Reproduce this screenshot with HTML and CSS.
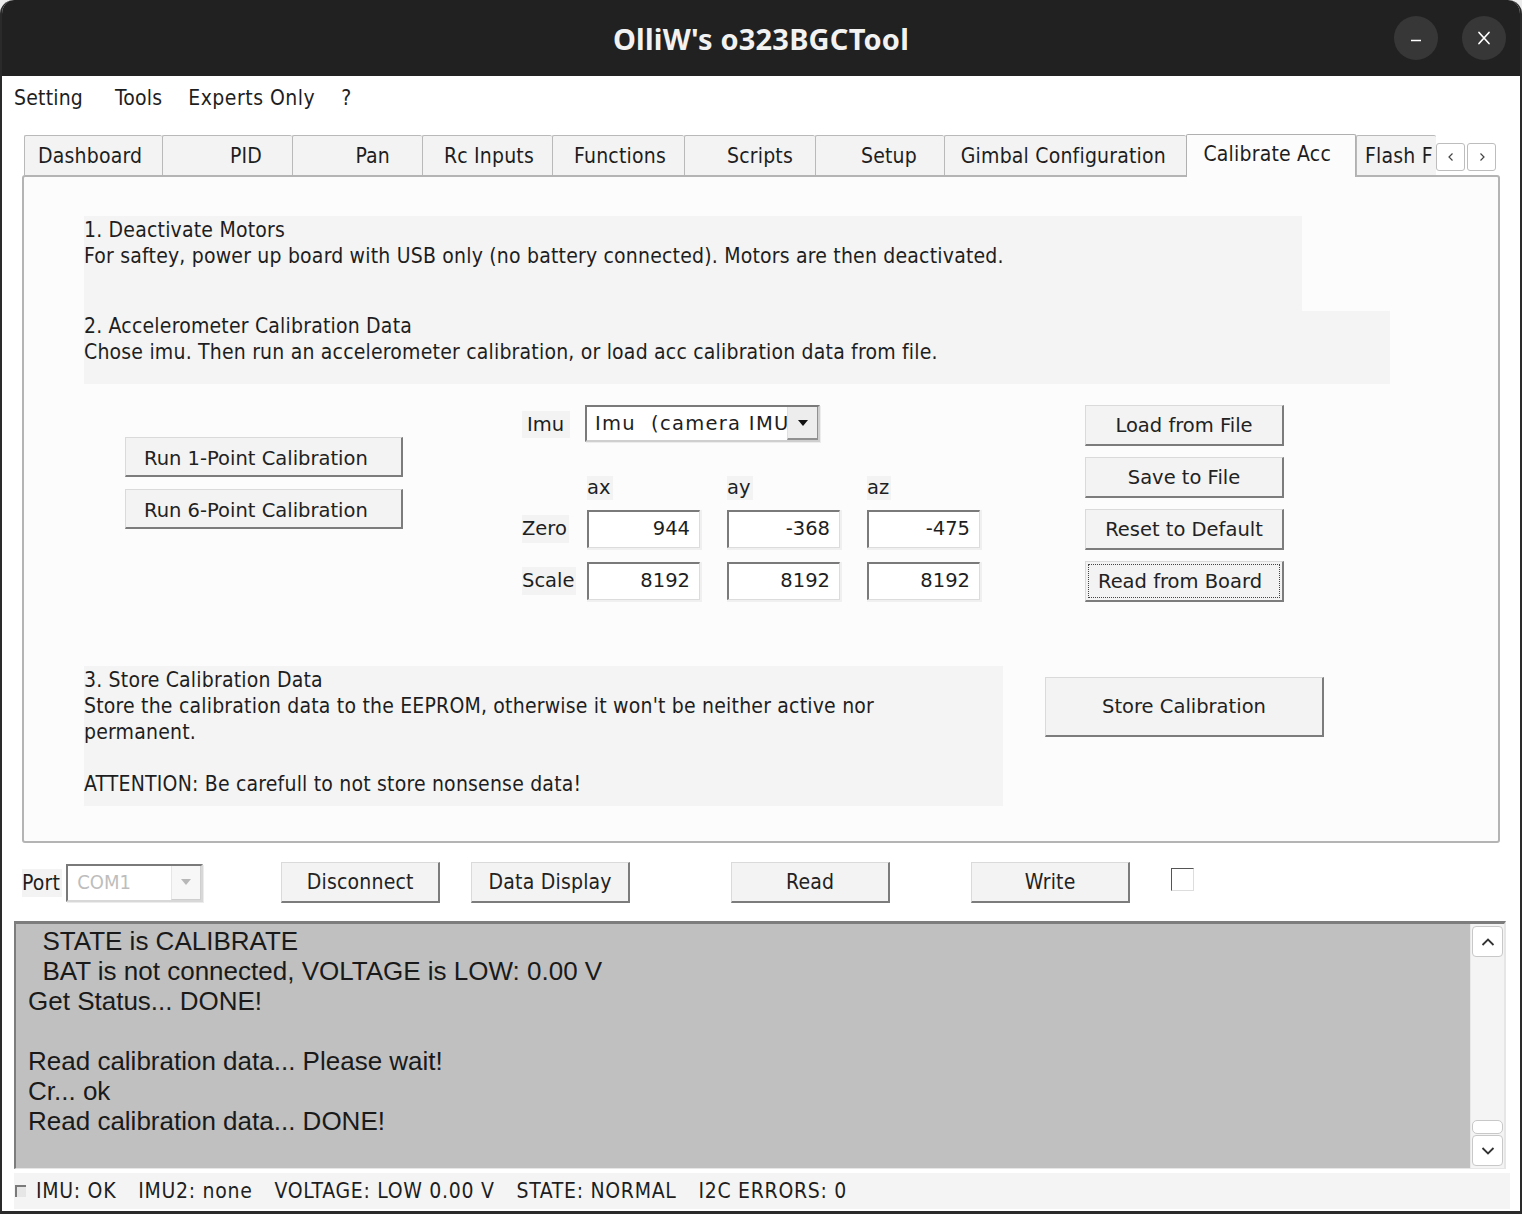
FILE: index.html
```html
<!DOCTYPE html>
<html>
<head>
<meta charset="utf-8">
<link rel="stylesheet" href="styles.css">
</head>
<body>
<div class="window">
  <div class="titlebar">
    <div class="tb-side"></div>
    <div class="title">OlliW's o323BGCTool</div>
    <div class="tb-side tb-right">
      <div class="wbtn"><svg width="18" height="18" viewBox="0 0 18 18"><path d="M4 11.5h10" stroke="#fff" stroke-width="1.6"/></svg></div>
      <div class="wbtn"><svg width="18" height="18" viewBox="0 0 18 18"><path d="M4 3.5l10 11M14 3.5l-10 11" stroke="#fff" stroke-width="1.7" stroke-linecap="round"/></svg></div>
    </div>
  </div>

  <div class="menubar">
    <span class="menu">Setting</span>
    <span class="menu">Tools</span>
    <span class="menu">Experts Only</span>
    <span class="menu">?</span>
  </div>

  <div class="main">
    <div class="tabs">
      <div class="tab t-dash">Dashboard</div>
      <div class="tab t-pid">PID</div>
      <div class="tab t-pan">Pan</div>
      <div class="tab t-rc">Rc Inputs</div>
      <div class="tab t-fn">Functions</div>
      <div class="tab t-sc">Scripts</div>
      <div class="tab t-setup">Setup</div>
      <div class="tab t-gimbal">Gimbal Configuration</div>
      <div class="tab tab-active t-cal">Calibrate Acc</div>
      <div class="tab t-flash">Flash F</div>
      <div class="tab-scroll">
        <div class="tsbtn"><svg width="10" height="12" viewBox="0 0 10 12"><path d="M6.5 2.5L3 6l3.5 3.5" fill="none" stroke="#444" stroke-width="1.2"/></svg></div>
        <div class="tsbtn"><svg width="10" height="12" viewBox="0 0 10 12"><path d="M3.5 2.5L7 6l-3.5 3.5" fill="none" stroke="#444" stroke-width="1.2"/></svg></div>
      </div>
    </div>

    <div class="panel">
      <div class="sec sec1">
        <div>1. Deactivate Motors</div>
        <div>For saftey, power up board with USB only (no battery connected). Motors are then deactivated.</div>
      </div>
      <div class="sec sec2">
        <div>2. Accelerometer Calibration Data</div>
        <div>Chose imu. Then run an accelerometer calibration, or load acc calibration data from file.</div>
      </div>

      <div class="calib">
        <div class="col-run">
          <button class="btn btn-run">Run 1-Point Calibration</button>
          <button class="btn btn-run">Run 6-Point Calibration</button>
        </div>

        <div class="col-data">
          <div class="imu-row">
            <span class="lbl lbl-imu">Imu</span>
            <div class="combo">
              <span class="combo-text">Imu&nbsp; (camera IMU)</span>
              <span class="combo-arrow"><svg width="14" height="8" viewBox="0 0 14 8"><path d="M2 1h10L7 7z" fill="#111"/></svg></span>
            </div>
          </div>
          <div class="grid">
            <span></span>
            <span class="lbl axis">ax</span>
            <span class="lbl axis">ay</span>
            <span class="lbl axis">az</span>

            <span class="lbl rowlbl">Zero</span>
            <div class="field">944</div>
            <div class="field">-368</div>
            <div class="field">-475</div>

            <span class="lbl rowlbl">Scale</span>
            <div class="field">8192</div>
            <div class="field">8192</div>
            <div class="field">8192</div>
          </div>
        </div>

        <div class="col-file">
          <button class="btn btn-file">Load from File</button>
          <button class="btn btn-file">Save to File</button>
          <button class="btn btn-file">Reset to Default</button>
          <button class="btn btn-file btn-focus"><span class="focus-ring">Read from Board</span></button>
        </div>
      </div>

      <div class="store-row">
        <div class="sec sec3">
          <div>3. Store Calibration Data</div>
          <div>Store the calibration data to the EEPROM, otherwise it won't be neither active nor<br>permanent.</div>
          <div>&nbsp;</div>
          <div>ATTENTION: Be carefull to not store nonsense data!</div>
        </div>
        <button class="btn btn-store">Store Calibration</button>
      </div>
    </div>

    <div class="controls">
      <span class="port-lbl">Port</span>
      <div class="combo combo-port">
        <span class="combo-text">COM1</span>
        <span class="combo-arrow"><svg width="14" height="8" viewBox="0 0 14 8"><path d="M2 1h10L7 7z" fill="#b8b8b8"/></svg></span>
      </div>
      <button class="btn btn-ctl b-disc">Disconnect</button>
      <button class="btn btn-ctl b-data">Data Display</button>
      <button class="btn btn-ctl b-read">Read</button>
      <button class="btn btn-ctl b-write">Write</button>
      <span class="chk"></span>
    </div>
  </div>

  <div class="log">
    <div class="log-text">  STATE is CALIBRATE
  BAT is not connected, VOLTAGE is LOW: 0.00 V
Get Status... DONE!

Read calibration data... Please wait!
Cr... ok
Read calibration data... DONE!</div>
    <div class="scrollbar">
      <div class="sbtn"><svg width="16" height="10" viewBox="0 0 16 10"><path d="M2.5 8L8 2.5 13.5 8" fill="none" stroke="#333" stroke-width="1.8"/></svg></div>
      <div class="strack"></div>
      <div class="sthumb"></div>
      <div class="sbtn"><svg width="16" height="10" viewBox="0 0 16 10"><path d="M2.5 2L8 7.5 13.5 2" fill="none" stroke="#333" stroke-width="1.8"/></svg></div>
    </div>
  </div>

  <div class="statusbar">
    <span class="sb-chk"></span>
    <span class="sb-item">IMU: OK</span>
    <span class="sb-item">IMU2: none</span>
    <span class="sb-item">VOLTAGE: LOW 0.00 V</span>
    <span class="sb-item">STATE: NORMAL</span>
    <span class="sb-item">I2C ERRORS: 0</span>
  </div>
</div>
</body>
</html>
```

FILE: styles.css
```css
* { box-sizing: border-box; }
html, body { margin: 0; padding: 0; }
body {
  background: #ececec;
  width: 1522px;
  height: 1214px;
  overflow: hidden;
}
.window {
  width: 1522px;
  height: 1214px;
  background: #ffffff;
  border-radius: 14px 14px 0 0;
  border: 2px solid #2a2a2a;
  border-top: none;
  border-bottom-width: 3px;
  display: flex;
  flex-direction: column;
  overflow: hidden;
  font-family: "DejaVu Sans Condensed", "DejaVu Sans", sans-serif;
  color: #1e1e1e;
}

/* Title bar */
.titlebar {
  height: 76px;
  flex: none;
  background: #212121;
  display: grid;
  grid-template-columns: 1fr auto 1fr;
  align-items: center;
  margin: 0 -2px;
  border-radius: 14px 14px 0 0;
}
.title {
  color: #f2f2f2;
  font-family: "Noto Sans", sans-serif;
  font-weight: 700;
  font-size: 29px;
  letter-spacing: 0.2px;
}
.tb-right {
  display: flex;
  justify-content: flex-end;
  gap: 24px;
  padding-right: 16px;
}
.wbtn {
  width: 44px;
  height: 44px;
  border-radius: 50%;
  background: #373737;
  display: flex;
  align-items: center;
  justify-content: center;
}

/* Menu */
.menubar {
  height: 44px;
  flex: none;
  display: flex;
  align-items: center;
  padding-left: 12px;
  font-size: 21px;
  letter-spacing: 0.2px;
}
.menu:nth-child(1) { margin-right: 32px; }
.menu:nth-child(2) { margin-right: 26px; }
.menu:nth-child(3) { margin-right: 26px; letter-spacing: 0.5px; }

/* Main */
.main {
  padding: 14px 20px 0 20px;
  flex: none;
}
.tabs {
  display: flex;
  align-items: flex-end;
  height: 42px;
  padding-left: 2px;
  position: relative;
  z-index: 2;
}
.tab {
  height: 40px;
  border: 1px solid #b9b9b9;
  border-bottom: none;
  border-right: none;
  background: #f3f3f3;
  font-size: 21px;
  letter-spacing: 0.2px;
  display: flex;
  align-items: center;
  justify-content: flex-end;
  padding-right: 20px;
  margin-bottom: 1px;
  border-radius: 2px 2px 0 0;
  white-space: nowrap;
}
.t-dash { width: 138px; justify-content: flex-start; padding-left: 13px; }
.t-pid { width: 130px; padding-right: 30px; }
.t-pan { width: 130px; padding-right: 32px; }
.t-rc { width: 130px; padding-right: 18px; }
.t-fn { width: 132px; padding-right: 18px; }
.t-sc { width: 131px; padding-right: 22px; }
.t-setup { width: 129px; padding-right: 27px; }
.t-gimbal { width: 242px; padding-right: 20px; }
.tab-active {
  height: 43px;
  background: #fcfcfc;
  border: 1px solid #b0b0b0;
  border-bottom: none;
  margin-bottom: -1px;
  padding-bottom: 4px;
}
.t-cal { width: 170px; padding-right: 24px; }
.t-flash { width: 80px; border-right: none; justify-content: flex-start; padding-left: 8px; padding-right: 0; overflow: hidden; }
.tab-scroll {
  display: flex;
  gap: 2px;
  align-self: center;
  margin-top: 4px;
}
.tsbtn {
  width: 29px;
  height: 28px;
  border: 1px solid #bdbdbd;
  border-radius: 3px;
  background: #fff;
  display: flex;
  align-items: center;
  justify-content: center;
}

/* Panel */
.panel {
  width: 1478px;
  height: 668px;
  margin-top: -1px;
  border: 2px solid #b4b4b4;
  border-radius: 3px;
  background: #fcfcfc;
  padding: 39px 0 0 60px;
  font-size: 21px;
  letter-spacing: 0.2px;
  line-height: 26px;
}
.sec { background: #f4f4f4; }
.sec1 { width: 1218px; height: 95px; padding-top: 1px; }
.sec2 { width: 1306px; height: 73px; padding-top: 2px; }

.calib {
  display: flex;
  height: 282px;
  letter-spacing: 0;
}
.col-run {
  display: flex;
  flex-direction: column;
  gap: 12px;
  margin-left: 41px;
  margin-top: 53px;
}
.btn {
  font-family: "DejaVu Sans", sans-serif;
  font-size: 19.5px;
  color: #222;
  background: #f3f3f3;
  border-top: 1px solid #dadada;
  border-left: 1px solid #dadada;
  border-right: 2px solid #7c7c7c;
  border-bottom: 2px solid #7c7c7c;
  border-radius: 0;
  padding: 0;
  margin: 0;
  display: flex;
  align-items: center;
  justify-content: center;
}
.btn-run { width: 278px; height: 40px; justify-content: flex-start; padding-left: 18px; padding-top: 3px; }

.col-data {
  margin-left: 119px;
  margin-top: 21px;
  display: flex;
  flex-direction: column;
}
.lbl {
  font-family: "DejaVu Sans", sans-serif;
  font-size: 19.5px;
  background: #f3f3f3;
}
.imu-row {
  display: flex;
  align-items: center;
  height: 37px;
}
.lbl-imu {
  width: 48px;
  height: 27px;
  padding-left: 5px;
  line-height: 27px;
  margin-right: 15px;
  margin-top: 1px;
}
.combo {
  display: flex;
  width: 235px;
  height: 37px;
  border-top: 2px solid #7a7a7a;
  border-left: 2px solid #7a7a7a;
  border-right: 2px solid #cfcfcf;
  border-bottom: 2px solid #cfcfcf;
  background: #fff;
  box-shadow: 1px 1px 0 #ececec;
}
.combo-text {
  flex: 1;
  overflow: hidden;
  white-space: nowrap;
  font-family: "DejaVu Sans", sans-serif;
  font-size: 19.5px;
  letter-spacing: 1.3px;
  line-height: 33px;
  padding-left: 8px;
}
.combo-arrow {
  width: 31px;
  flex: none;
  background: #ededed;
  border-left: 1px solid #e0e0e0;
  border-bottom: 2px solid #909090;
  border-right: 1px solid #909090;
  display: flex;
  align-items: center;
  justify-content: center;
}

.grid {
  display: grid;
  grid-template-columns: 65px 140px 140px 113px;
  grid-template-rows: 20px 38px 38px;
  row-gap: 14px;
  margin-top: 34px;
  align-items: center;
}
.axis {
  justify-self: start;
  align-self: start;
  padding: 0 2px 0 0;
  height: 24px;
  line-height: 24px;
}
.rowlbl {
  justify-self: start;
  height: 28px;
  line-height: 28px;
  padding-right: 2px;
}
.field {
  width: 113px;
  height: 38px;
  background: #fff;
  border-top: 2px solid #7a7a7a;
  border-left: 2px solid #7a7a7a;
  border-right: 1px solid #dcdcdc;
  border-bottom: 1px solid #dcdcdc;
  box-shadow: 1px 1px 0 1px #f0f0f0;
  font-family: "DejaVu Sans", sans-serif;
  font-size: 19.5px;
  text-align: right;
  padding-right: 9px;
  line-height: 34px;
}

.col-file {
  margin-left: 105px;
  margin-top: 21px;
  display: flex;
  flex-direction: column;
  gap: 11px;
}
.btn-file { width: 199px; height: 41px; }
.btn-focus { padding: 2px; }
.focus-ring {
  width: 100%;
  height: 100%;
  border: 1px dotted #444;
  display: flex;
  align-items: center;
  justify-content: center;
  padding-right: 8px;
}

.store-row {
  display: flex;
  align-items: flex-start;
}
.sec3 { width: 919px; height: 140px; padding-top: 1px; }
.btn-store {
  width: 279px;
  height: 60px;
  margin-left: 42px;
  margin-top: 11px;
  letter-spacing: 0;
}

/* Controls row */
.controls {
  display: flex;
  align-items: center;
  height: 78px;
  padding-top: 1px;
  font-size: 21px;
  letter-spacing: 0.2px;
}
.port-lbl {
  background: #f3f3f3;
  padding: 0 2px 0 0;
  line-height: 28px;
  margin-right: 4px;
}
.combo-port {
  width: 137px;
  height: 38px;
  background: #fff;
  border-right-color: #d8d8d8;
  border-bottom-color: #d8d8d8;
}
.combo-port .combo-text {
  color: #bdbdbd;
  font-family: "DejaVu Sans Condensed", "DejaVu Sans", sans-serif;
  font-size: 20px;
  letter-spacing: 0;
  padding-left: 9px;
}
.combo-port .combo-arrow {
  width: 30px;
  background: #f7f7f7;
  border-left: 1px solid #e6e6e6;
  border-bottom: 1px solid #cfcfcf;
  border-right: 1px solid #cfcfcf;
}
.btn-ctl {
  width: 159px;
  height: 41px;
  font-family: "DejaVu Sans Condensed", "DejaVu Sans", sans-serif;
  font-size: 21px;
  letter-spacing: 0.2px;
}
.b-disc { margin-left: 78px; }
.b-data { margin-left: 31px; }
.b-read { margin-left: 101px; }
.b-write { margin-left: 81px; }
.chk {
  width: 23px;
  height: 23px;
  margin-left: 41px;
  margin-top: -6px;
  border-top: 1px solid #555;
  border-left: 1px solid #555;
  border-right: 1px solid #ddd;
  border-bottom: 1px solid #ddd;
  background: #fff;
}

/* Log */
.log {
  margin-left: 12px;
  width: 1492px;
  height: 248px;
  flex: none;
  display: flex;
  background: #c0c0c0;
  border-top: 3px solid #7d7d7d;
  border-left: 2px solid #7d7d7d;
  border-right: 2px solid #e6e6e6;
  border-bottom: 1px solid #e6e6e6;
}
.log-text {
  flex: 1;
  white-space: pre;
  font-family: "Liberation Sans", Arial, sans-serif;
  font-size: 26px;
  line-height: 30px;
  color: #1a1a1a;
  padding-left: 12px;
  padding-top: 2px;
}
.scrollbar {
  width: 34px;
  background: #f4f4f4;
  border-left: 1px solid #e8e8e8;
  display: flex;
  flex-direction: column;
  align-items: center;
  padding: 2px 0 2px 0;
}
.sbtn {
  width: 31px;
  height: 31px;
  border: 1px solid #c8c8c8;
  border-radius: 4px;
  background: #fff;
  display: flex;
  align-items: center;
  justify-content: center;
  flex: none;
}
.strack { flex: 1; }
.sthumb {
  width: 31px;
  height: 14px;
  border: 1px solid #c8c8c8;
  border-radius: 5px;
  background: #fff;
  margin-bottom: 1px;
}

/* Status bar */
.statusbar {
  margin: 4px 0 0 12px;
  width: 1496px;
  height: 36px;
  background: #f4f4f4;
  display: flex;
  align-items: center;
  font-size: 21px;
  letter-spacing: 0.7px;
}
.sb-chk {
  width: 11px;
  height: 12px;
  background: #e6e6e6;
  border-top: 2px solid #7a7a7a;
  border-left: 2px solid #7a7a7a;
  margin-right: 10px;
  margin-left: 1px;
}
.sb-item { margin-right: 22px; }
```
